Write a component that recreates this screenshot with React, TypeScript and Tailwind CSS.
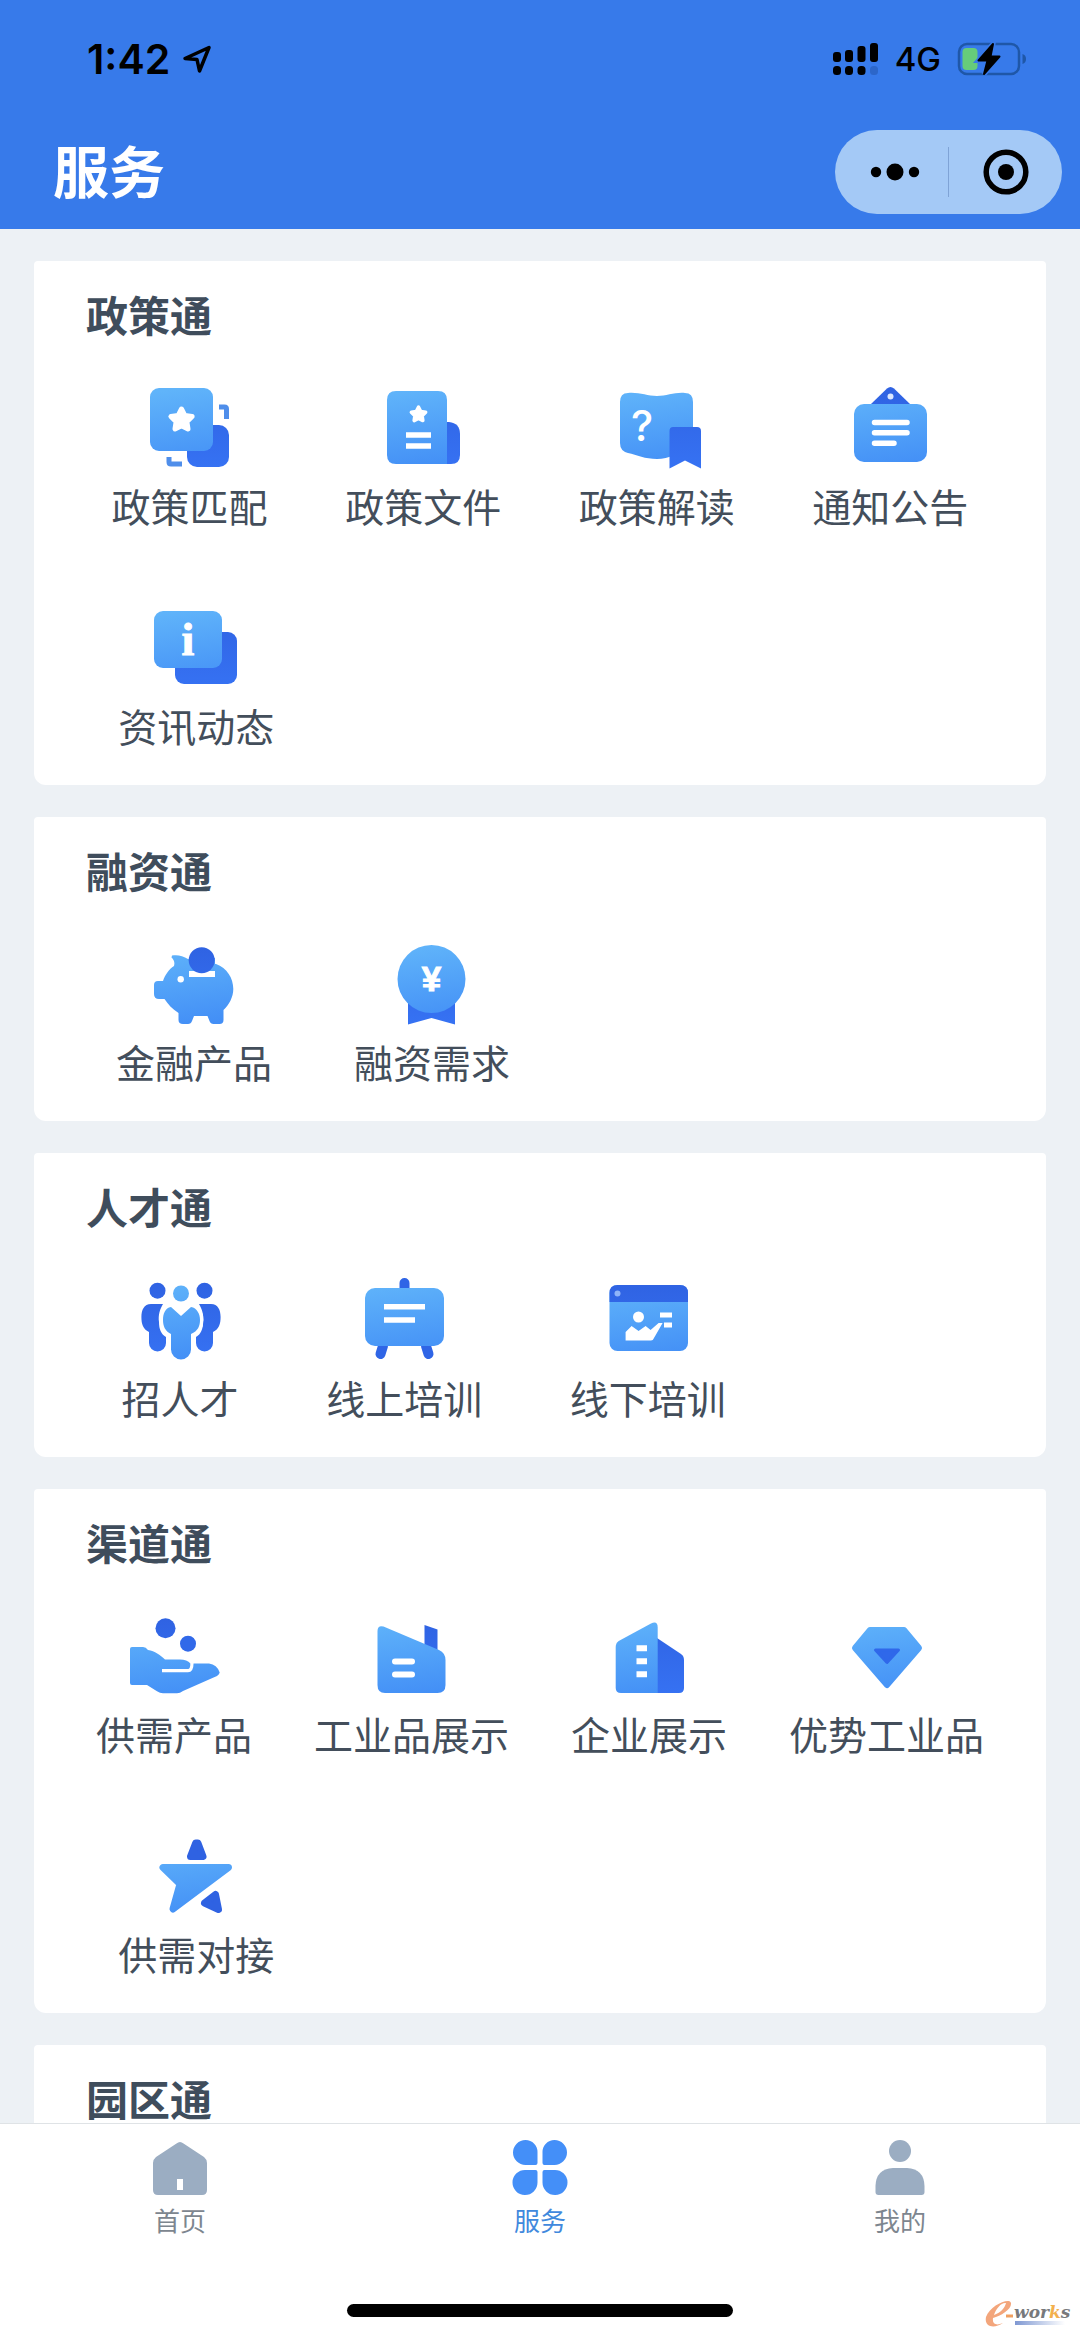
import { useState, type ReactNode } from "react";

type Service = { label: string; icon: ReactNode };
type Section = { title: string; rows: Service[][] };

const LIGHT = "url(#light)";
const DARK = "url(#dark)";

// shared gradients for every 96x96 service icon
function Gradients() {
  return (
    <svg className="absolute h-0 w-0" aria-hidden="true">
      <defs>
        <linearGradient id="light" gradientUnits="userSpaceOnUse" x1="40" y1="8" x2="52" y2="88">
          <stop offset="0" stopColor="#60b4fa" />
          <stop offset="1" stopColor="#438ff6" />
        </linearGradient>
        <linearGradient id="dark" gradientUnits="userSpaceOnUse" x1="48" y1="8" x2="48" y2="88">
          <stop offset="0" stopColor="#2f62e2" />
          <stop offset="1" stopColor="#3672f3" />
        </linearGradient>
        <linearGradient id="underline" x1="0" x2="1">
          <stop offset="0" stopColor="#7f98d2" />
          <stop offset="1" stopColor="#ffffff" />
        </linearGradient>
      </defs>
    </svg>
  );
}

function Icon({ children }: { children: ReactNode }) {
  return (
    <svg viewBox="0 0 96 96" className="h-24 w-24" aria-hidden="true">
      {children}
    </svg>
  );
}

const STAR = "M0-11 3.4-4.4 10.6-3.4 5.4 1.8 6.5 9 0 5.8-6.5 9-5.4 1.8-10.6-3.4-3.4-4.4z";
const SIDE_PERSON =
  "M19 32H31C28 37 26 43 27 50C27 57 29 62 34 65V71a8.500 8.500 0 0 1-17 0V60C11 57 9.400 52 9.400 45C9.400 38 12 32 19 32z";

const sections: Section[] = [
  {
    title: "政策通",
    rows: [
      [
        {
          label: "政策匹配",
          icon: (
            <Icon>
              <rect x="45" y="45" width="42" height="42" rx="10" fill={DARK} />
              <rect x="8" y="8" width="63" height="63" rx="9" fill={LIGHT} />
              <path d="M77 27h5.500q2 0 2 2v10M27 77v5q0 2 2 2h11" fill="none" stroke="#4f8eea" strokeWidth="5" />
              <path d={STAR} transform="translate(39.500 40)" fill="#fff" stroke="#fff" strokeWidth="5" strokeLinejoin="round" />
            </Icon>
          ),
        },
        {
          label: "政策文件",
          icon: (
            <Icon>
              <path d="M72 42h2q11 1 11 12v21q0 9-9 9h-6z" fill={DARK} />
              <path d="M21 11h42q9 0 9 9v64H21q-9 0-9-9V20q0-9 9-9z" fill={LIGHT} />
              <path d={STAR} transform="translate(43.500 34.500) scale(.68)" fill="#fff" stroke="#fff" strokeWidth="5" strokeLinejoin="round" />
              <path d="M31 55h25M31 66h25" stroke="#fff" strokeWidth="5.500" />
            </Icon>
          ),
        },
        {
          label: "政策解读",
          icon: (
            <Icon>
              <path d="M19 13C30 12 38 16 48 16S66 12 76 13q8 0 8 9v50C70 72 60 79 48 79S28 75 19 73q-8-2-8-10V22q0-9 8-9z" fill={LIGHT} />
              <path d="M64 47h24q4 0 4 4v37.500L76 80.500 60.500 88.500V51q0-4 3.500-4z" fill={DARK} />
              <text x="33" y="61" textAnchor="middle" fontFamily="Inter, sans-serif" fontSize="42" fontWeight="500" fill="#fff">?</text>
            </Icon>
          ),
        },
        {
          label: "通知公告",
          icon: (
            <Icon>
              <path d="M28 25 45 8.500q3.500-3 7 0L69 25z" fill={DARK} />
              <rect x="12" y="24" width="73" height="58" rx="10" fill={LIGHT} />
              <circle cx="48.500" cy="16.500" r="3" fill="#dbe7ff" />
              <path d="M32.500 42.500h32.500M32.500 52.700h32.500M32.500 63.300h19.500" stroke="#fff" strokeWidth="5.500" strokeLinecap="round" />
            </Icon>
          ),
        },
      ],
      [
        {
          label: "资讯动态",
          icon: (
            <Icon>
              <rect x="27" y="32" width="62" height="52" rx="9" fill={DARK} />
              <rect x="6" y="11" width="68" height="57" rx="9" fill={LIGHT} />
              <text x="40" y="55" textAnchor="middle" fontFamily="Liberation Serif, serif" fontSize="46" fontWeight="700" fill="#fff" stroke="#fff">i</text>
            </Icon>
          ),
        },
      ],
    ],
  },
  {
    title: "融资通",
    rows: [
      [
        {
          label: "金融产品",
          icon: (
            <Icon>
              <path
                d="M26 19.500C31 18.500 37 19.500 42 23L70 28C81 32 87.300 42 87.300 53C87.300 61 83 69 77.500 74V84q0 4-4 4h-6q-3 0-4-3l-2-5H48l-2 5q-1 3-4 3h-5q-4.500 0-4.500-4V77C26 73 22 68 18.500 63H13q-5 0-5-5V49q0-4 4-4h5C19 39 23 33 28 30C29 26 28 24 25.500 21.500z"
                fill={LIGHT}
              />
              <path d="M43 27h26v14H43z" fill="#fff" />
              <path d="M43 22h26v13H43z" fill={LIGHT} />
              <circle cx="55.700" cy="24.300" r="13" fill={DARK} />
              <circle cx="34.700" cy="43.300" r="3.200" fill="#fff" />
            </Icon>
          ),
        },
        {
          label: "融资需求",
          icon: (
            <Icon>
              <path d="M24 60h47v28.500L47.500 82 24 88.500z" fill={DARK} />
              <circle cx="47.500" cy="43" r="34" fill={LIGHT} />
              <text x="47.500" y="55" textAnchor="middle" fontFamily="Liberation Sans, sans-serif" fontSize="35" fontWeight="700" fill="#fff" stroke="#fff">¥</text>
            </Icon>
          ),
        },
      ],
    ],
  },
  {
    title: "人才通",
    rows: [
      [
        {
          label: "招人才",
          icon: (
            <Icon>
              <g fill={DARK}>
                <circle cx="25.500" cy="18.700" r="8" />
                <path d={SIDE_PERSON} />
              </g>
              <g fill={DARK} transform="translate(98 0) scale(-1 1)">
                <circle cx="25.500" cy="18.700" r="8" />
                <path d={SIDE_PERSON} />
              </g>
              <path
                d="M39 35 49 44 59 35C65 36 68 42 68 48C68 54 66 59 59 62V77.500a10 10 0 0 1-20 0V62C33 59 31 54 31 48C31 42 33 36 39 35z"
                fill={LIGHT}
                stroke="#fff"
                strokeWidth="7"
                paintOrder="stroke"
              />
              <circle cx="49" cy="21.500" r="8" fill={LIGHT} />
            </Icon>
          ),
        },
        {
          label: "线上培训",
          icon: (
            <Icon>
              <path d="M48.500 11v8M27 74l-2.500 8M70 74l2.500 8" stroke="#2f65e6" strokeWidth="10" strokeLinecap="round" />
              <rect x="9" y="16" width="79" height="58" rx="10" fill={LIGHT} />
              <path d="M28 34.700h41M28 48h31" stroke="#fff" strokeWidth="5.500" />
            </Icon>
          ),
        },
        {
          label: "线下培训",
          icon: (
            <Icon>
              <rect x="9.500" y="13" width="78.500" height="66" rx="8" fill={LIGHT} />
              <path d="M9.500 30v-9q0-8 8-8H80q8 0 8 8v9z" fill={DARK} />
              <circle cx="17.500" cy="21.500" r="3" fill="#8fb4f8" />
              <circle cx="38.500" cy="45" r="5.500" fill="#fff" />
              <path d="M25.600 68.500V60l6-6 7 5 7-5 5 4 8-7h4L54 66q-1 2.500-3 2.500z" fill="#fff" />
              <path d="M60 40.500h12v5H60zM64 50.500h8v5h-8z" fill="#fff" />
            </Icon>
          ),
        },
      ],
    ],
  },
  {
    title: "渠道通",
    rows: [
      [
        {
          label: "供需产品",
          icon: (
            <Icon>
              <circle cx="39.500" cy="20.300" r="10" fill={DARK} />
              <circle cx="62" cy="35.700" r="8" fill="#3169e9" />
              <path
                d="M6 39h11q3 0 5 3C29 43 34 47 39 51.500H54q7 0 10.500 4H83q8 1 10.700 9-1 3-5 4.500L57 83q-3 2.300-6 2.300H37q-3 0-6-2L21 77H6q-2 0-2-2V41q0-2 2-2z"
                fill={LIGHT}
              />
              <path d="M36 62.700h26q4 0 4-8" fill="none" stroke="#fff" strokeWidth="3.200" />
            </Icon>
          ),
        },
        {
          label: "工业品展示",
          icon: (
            <Icon>
              <path d="M61.500 17 74.500 21.500V46h-13z" fill={DARK} />
              <path d="M14.500 23q0-6 6-4.500L76 42q6.500 3 6.500 10v25q0 8-8 8H22q-7.500 0-7.500-8z" fill={LIGHT} />
              <path d="M32 53.500h17M32 66.500h17" stroke="#fff" strokeWidth="6" strokeLinecap="round" />
            </Icon>
          ),
        },
        {
          label: "企业展示",
          icon: (
            <Icon>
              <path d="M56 30 80 46q3 2 3 6v28q0 5-5 5H56z" fill={DARK} />
              <path d="M14.700 39q0-4 3-6L50 15.500q6.700-3 6.700 4V85H20q-5.300 0-5.300-5z" fill={LIGHT} />
              <path d="M35.500 40.300H46M35.500 53.300H46M35.500 66.300H46" stroke="#fff" strokeWidth="6" />
            </Icon>
          ),
        },
        {
          label: "优势工业品",
          icon: (
            <Icon>
              <path d="M32 22H66L81 40 49 77 17 40z" fill={LIGHT} stroke={LIGHT} strokeWidth="6" strokeLinejoin="round" />
              <path d="M37.500 42H60.500L49 54.500z" fill="#2f68ea" stroke="#2f68ea" strokeWidth="3" strokeLinejoin="round" />
            </Icon>
          ),
        },
      ],
      [
        {
          label: "供需对接",
          icon: (
            <Icon>
              <path d="M15 39.500H80.500L25 81 32 56z" fill={LIGHT} stroke={LIGHT} strokeWidth="7" strokeLinejoin="round" />
              <path d="M47.700 15h2.200L55 28.500H42.500zM67.500 66.500 70.500 81.500 56.500 75z" fill="#2f62e2" stroke="#2f62e2" strokeWidth="7" strokeLinejoin="round" />
            </Icon>
          ),
        },
      ],
    ],
  },
  { title: "园区通", rows: [] },
];

const tabs = [
  {
    label: "首页",
    icon: (
      <path
        fillRule="evenodd"
        d="M24.500 3.500q3.500-3 7 0L52 17q3 2.500 3 6v27q0 5-5 5H6q-5 0-5-5V23q0-3.500 3-6zM25 39v11h6V39z"
      />
    ),
  },
  {
    label: "服务",
    icon: (
      <path d="M13.500 0A12 12 0 0 1 25.500 12.500V23q0 2-2 2H13.500a12.500 12.500 0 0 1 0-25zM42.500 0a12.500 12.500 0 0 1 0 25H32.500q-2 0-2-2V12.500A12 12 0 0 1 42.500 0zM13.500 30H23.500q2 0 2 2V42.500a12.500 12.500 0 1 1-12-12.500zM32.500 30H42.500a12.500 12.500 0 1 1-12 12.500V32q0-2 2-2z" />
    ),
  },
  {
    label: "我的",
    icon: (
      <>
        <circle cx="28" cy="11" r="11" />
        <path d="M21 28H35Q52 29 52.500 46V52q0 3-3 3H6.500q-3 0-3-3V46Q4 29 21 28z" />
      </>
    ),
  },
];

function StatusBar() {
  return (
    <div className="flex h-[118px] items-center justify-between pr-[53px] pl-[87px]">
      <div className="flex items-center gap-3 text-black">
        <span className="font-[Inter,sans-serif] text-[41px] leading-none font-semibold">1:42</span>
        <svg viewBox="0 0 30 30" className="h-[30px] w-[30px]" aria-hidden="true">
          <path d="M3 14.500 27 3.500 17.500 27 15 15.500z" fill="none" stroke="currentColor" strokeWidth="3.500" strokeLinejoin="round" />
        </svg>
      </div>
      <div className="flex items-center gap-4">
        <svg viewBox="0 0 46 34" className="h-[34px] w-[46px]" aria-hidden="true">
          <rect x="0" y="10" width="8" height="10" rx="3" />
          <rect x="12" y="8" width="8" height="12" rx="3" />
          <rect x="24.500" y="4" width="8" height="16" rx="3" />
          <rect x="37" y="1" width="8" height="19" rx="3" />
          <rect x="0" y="24" width="8" height="9" rx="3.500" />
          <rect x="12" y="24" width="8" height="9" rx="3.500" />
          <rect x="24.500" y="24" width="8" height="9" rx="3.500" />
          <rect x="37" y="24" width="8" height="9" rx="3.500" fill="#2c66c9" />
        </svg>
        <span className="font-[Inter,sans-serif] text-[33px] leading-none font-medium text-black">4G</span>
        <svg viewBox="0 0 70 36" className="h-9 w-[70px]" aria-hidden="true">
          <rect x="2" y="3" width="60" height="30" rx="8" fill="none" stroke="#1f57a8" strokeWidth="2.500" />
          <path d="M65.500 13q3.500 1 3.500 5t-3.500 5z" fill="#1f57a8" />
          <rect x="5.500" y="7" width="15" height="22" rx="4" fill="#66cc7a" />
          <path d="M36 3 21.500 19.500h9L27 33 42.500 15.500h-9z" stroke="#377aea" strokeWidth="5" />
          <path d="M36 3 21.500 19.500h9L27 33 42.500 15.500h-9z" stroke="#000" strokeWidth="2" strokeLinejoin="round" />
        </svg>
      </div>
    </div>
  );
}

function Capsule() {
  return (
    <div className="flex h-[84px] w-[227px] items-center rounded-full bg-[#a4c9f6] text-black">
      <button type="button" aria-label="更多" className="flex h-full w-[113px] items-center justify-center pl-1.5">
        <svg viewBox="0 0 50 18" className="h-[18px] w-[50px]" aria-hidden="true">
          <circle cx="6" cy="9" r="5.200" />
          <circle cx="25" cy="9" r="8.500" />
          <circle cx="44" cy="9" r="5.200" />
        </svg>
      </button>
      <span className="h-[50px] w-px bg-[#7fa3d6]" />
      <button type="button" aria-label="关闭" className="flex h-full flex-1 items-center justify-center">
        <svg viewBox="0 0 46 46" className="h-[46px] w-[46px]" aria-hidden="true">
          <circle cx="23" cy="23" r="19.800" fill="none" stroke="currentColor" strokeWidth="5.500" />
          <circle cx="23" cy="23" r="8" />
        </svg>
      </button>
    </div>
  );
}

function ServiceRow({ items }: { items: Service[] }) {
  // short rows are padded with empty cells so they line up to the left
  const blanks = Array.from({ length: 4 - items.length });
  return (
    <div className="flex justify-evenly">
      {items.map((item) => (
        <button key={item.label} type="button" className="flex flex-col items-center gap-[3px]">
          {item.icon}
          <span className="text-[39px] leading-[52px] whitespace-nowrap text-[#434e5b]">{item.label}</span>
        </button>
      ))}
      {blanks.map((_, i) => (
        <span key={i} className="w-[145px]" />
      ))}
    </div>
  );
}

function Watermark() {
  return (
    <div className="absolute right-1 bottom-2" aria-label="e-works">
      <svg viewBox="0 0 92 30" className="h-[30px] w-[92px]" aria-hidden="true">
        <path d="M27 4C26-2 6 6 2 18C0 28 10 30 19 24C12 27 8 25 9 19C17 17 28 10 27 4zM22 4C21 9 16 14 10 16C12 9 18 3 22 4z" fill="#f3a67c" fillRule="evenodd" />
        <path d="M22 17h7" stroke="#f0a060" strokeWidth="3" />
        <text x="30" y="19" fontFamily="DejaVu Serif, serif" fontSize="17" fontWeight="700" fontStyle="italic" fill="#77797c">
          wor<tspan fill="#f3b04e">k</tspan>s
        </text>
        <rect x="31" y="22" width="50" height="4" fill="url(#underline)" />
      </svg>
    </div>
  );
}

export default function App() {
  const [active, setActive] = useState("服务");

  return (
    <div className="flex h-screen flex-col bg-[#edf1f5] font-['Noto_Sans_CJK_SC',sans-serif]">
      <Gradients />
      <header className="bg-[#377aea] pb-[3px]">
        <StatusBar />
        <div className="flex h-[108px] items-center justify-between pr-[18px] pl-[53px]">
          <h1 className="pb-1.5 text-[56px] leading-none font-bold text-white">服务</h1>
          <Capsule />
        </div>
      </header>

      <main className="flex min-h-0 flex-1 flex-col gap-8 overflow-hidden px-[34px] pt-8">
        {sections.map((section) => (
          <section key={section.title} className="shrink-0 rounded-t-sm rounded-b-xl bg-white pt-[29px] pb-[34px]">
            <h2 className="pl-[52px] text-[42px] leading-[48px] font-bold text-[#3f4d5c]">{section.title}</h2>
            <div className="mt-[42px] flex flex-col gap-[69px]">
              {section.rows.map((row, i) => (
                <ServiceRow key={i} items={row} />
              ))}
            </div>
          </section>
        ))}
      </main>

      <nav className="relative border-t border-[#dfe3e6] bg-white">
        <div className="flex h-[180px] pt-4">
          {tabs.map((tab) => (
            <button
              key={tab.label}
              type="button"
              onClick={() => setActive(tab.label)}
              className="flex flex-1 flex-col items-center gap-1.5"
            >
              <svg
                viewBox="0 0 56 56"
                className={active === tab.label ? "h-14 w-14 fill-[#448ff8]" : "h-14 w-14 fill-[#9badc2]"}
                aria-hidden="true"
              >
                {tab.icon}
              </svg>
              <span className={active === tab.label ? "text-[26px] leading-9 text-[#4189dd]" : "text-[26px] leading-9 text-[#7d868f]"}>
                {tab.label}
              </span>
            </button>
          ))}
        </div>
        <div className="flex h-[33px] justify-center">
          <span className="h-[13px] w-[386px] rounded-full bg-black" />
        </div>
        <Watermark />
      </nav>
    </div>
  );
}
